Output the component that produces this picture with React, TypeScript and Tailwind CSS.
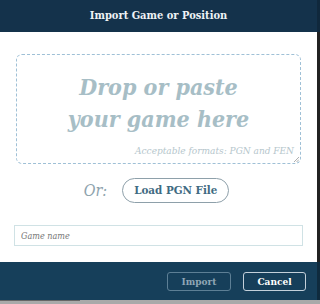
import React from 'react';

const SERIF = { fontFamily: '"DejaVu Serif Condensed", "DejaVu Serif", serif' };

export default function App() {
  return (
    <div className="w-[320px] h-[304px] flex flex-col bg-[#a9a9a9] overflow-hidden" style={SERIF}>
      <div className="flex flex-1 min-h-0">
        <div className="w-[317px] flex flex-col bg-white">
          <div className="h-[32px] bg-[#14324b] flex items-center justify-center">
            <h1 className="text-[#eef2f5] text-[11px] font-bold">Import Game or Position</h1>
          </div>

          <div className="flex-1 flex flex-col px-[14px] pt-[22px]">
            <div className="relative mx-[2px] h-[110px] border border-dashed border-[#9fc0d6] rounded-[6px] flex flex-col items-center pt-[16px]">
              <p className="text-[#a7bec6] text-[23px] leading-[32px] font-bold italic text-center">
                Drop or paste
                <br />
                your game here
              </p>
              <span className="absolute right-[6px] bottom-[5px] text-[#b5c6cc] text-[10px] italic">
                Acceptable formats: PGN and FEN
              </span>
              <svg className="absolute right-[1px] bottom-[1px]" width="6" height="6" viewBox="0 0 6 6">
                <path d="M1 6 L6 1 M3.5 6 L6 3.5" stroke="#999" strokeWidth="0.8" />
              </svg>
            </div>

            <div className="flex items-center justify-center gap-[15px] mt-[14px] mr-[4px]">
              <span className="text-[#8ea3ad] text-[16px] italic">Or:</span>
              <button className="h-[25px] px-[11px] rounded-full border border-[#8ea0aa] text-[#3f6b82] text-[11.5px] font-bold">
                Load PGN File
              </button>
            </div>

            <input
              className="mt-[22px] h-[21px] w-full border border-[#d0e2e5] px-[6px] text-[9px] italic text-[#555] placeholder:text-[#777] outline-none"
              placeholder="Game name"
            />
          </div>

          <div className="h-[38px] bg-[#163f5a] flex items-center justify-end gap-[12px] pr-[11px]">
            <button className="w-[64px] h-[19px] rounded-[3px] border border-[#5d7f95] text-[#8fa6b5] text-[10px] font-bold">
              Import
            </button>
            <button className="w-[63px] h-[19px] rounded-[3px] border border-[#c3d0da] text-white text-[10px] font-bold">
              Cancel
            </button>
          </div>
        </div>
        <div className="flex-1 flex flex-col">
          <div className="h-[32px] bg-[#10283c]" />
          <div className="flex-1 bg-[#222]" />
          <div className="h-[38px] bg-[#0f2b3e]" />
        </div>
      </div>
      <div className="h-[4px] flex">
        <div className="w-[80px] bg-[#666] h-[1px]" />
      </div>
    </div>
  );
}
